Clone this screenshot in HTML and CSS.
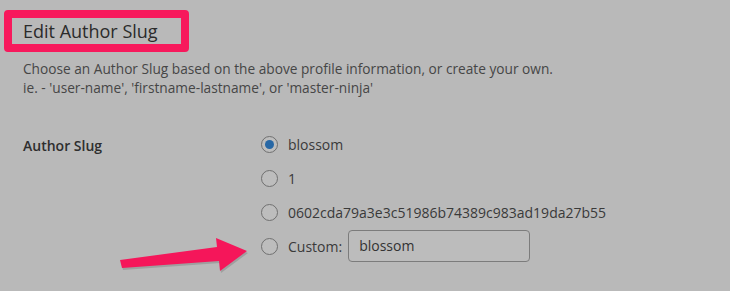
FILE: index.html
```html
<!DOCTYPE html>
<html>
<head>
<meta charset="utf-8">
<link rel="stylesheet" href="styles.css">
</head>
<body>
<div class="page">
  <div class="title-box"><h2 class="title">Edit Author Slug</h2></div>
  <p class="desc">Choose an Author Slug based on the above profile information, or create your own.<br>ie. - 'user-name', 'firstname-lastname', or 'master-ninja'</p>
  <div class="field">
    <div class="label">Author Slug</div>
    <div class="options">
      <label class="opt"><span class="radio checked"></span><span>blossom</span></label>
      <label class="opt"><span class="radio"></span><span>1</span></label>
      <label class="opt"><span class="radio"></span><span>0602cda79a3e3c51986b74389c983ad19da27b55</span></label>
      <label class="opt"><span class="radio"></span><span>Custom:</span><span class="input">blossom</span></label>
    </div>
  </div>
  <svg class="arrow" width="140" height="45" viewBox="110 232 140 45">
    <polygon points="120,260 217,247 216,238 247,251 220,271 219,261 122,268" fill="#8e8e8e" transform="translate(1,2)" opacity="0.6"/>
    <polygon points="120,260 217,247 216,238 247,251 220,271 219,261 122,268" fill="#f5165a"/>
  </svg>
</div>
</body>
</html>
```
FILE: styles.css
```css
html, body {
  margin: 0;
  padding: 0;
  background: #b9b9b9;
}
.page {
  position: relative;
  width: 730px;
  height: 291px;
  overflow: hidden;
  font-family: "Open Sans", "Noto Sans", sans-serif;
  color: #2e2e2e;
}
.title-box {
  margin: 10px 0 0 4px;
  width: 169px;
  height: 26px;
  border: 8px solid #f7195c;
  border-radius: 4px;
}
.title {
  margin: 0;
  padding: 1px 0 0 11px;
  font-size: 18px;
  font-weight: 400;
  line-height: 24px;
  color: #2b2b2b;
  white-space: nowrap;
}
.desc {
  margin: 7px 0 0 23px;
  font-size: 13.7px;
  line-height: 19px;
  color: #464646;
}
.field {
  display: flex;
  margin: 38px 0 0 23px;
}
.label {
  width: 238px;
  font-size: 14px;
  font-weight: 600;
  line-height: 20px;
  margin-top: 1px;
  color: #2e2e2e;
}
.options {
  display: flex;
  flex-direction: column;
  gap: 14px;
  margin-top: -1px;
}
.opt {
  display: flex;
  align-items: center;
  gap: 10px;
  height: 20px;
  font-size: 14px;
  color: #3a3a3a;
}
.radio {
  box-sizing: border-box;
  width: 17px;
  height: 17px;
  border: 1px solid #707070;
  border-radius: 50%;
  background: #bdbdbd;
  position: relative;
}
.radio.checked::after {
  content: "";
  position: absolute;
  left: 3px;
  top: 3px;
  width: 9px;
  height: 9px;
  border-radius: 50%;
  background: #2767a5;
}
.input {
  box-sizing: border-box;
  margin-left: -4px;
  width: 182px;
  height: 32px;
  border: 1px solid #7c7c7c;
  border-radius: 4px;
  background: #bcbcbc;
  padding: 0 10px;
  line-height: 30px;
  font-size: 14px;
  color: #333;
}
.arrow {
  position: absolute;
  left: 110px;
  top: 232px;
}
```
